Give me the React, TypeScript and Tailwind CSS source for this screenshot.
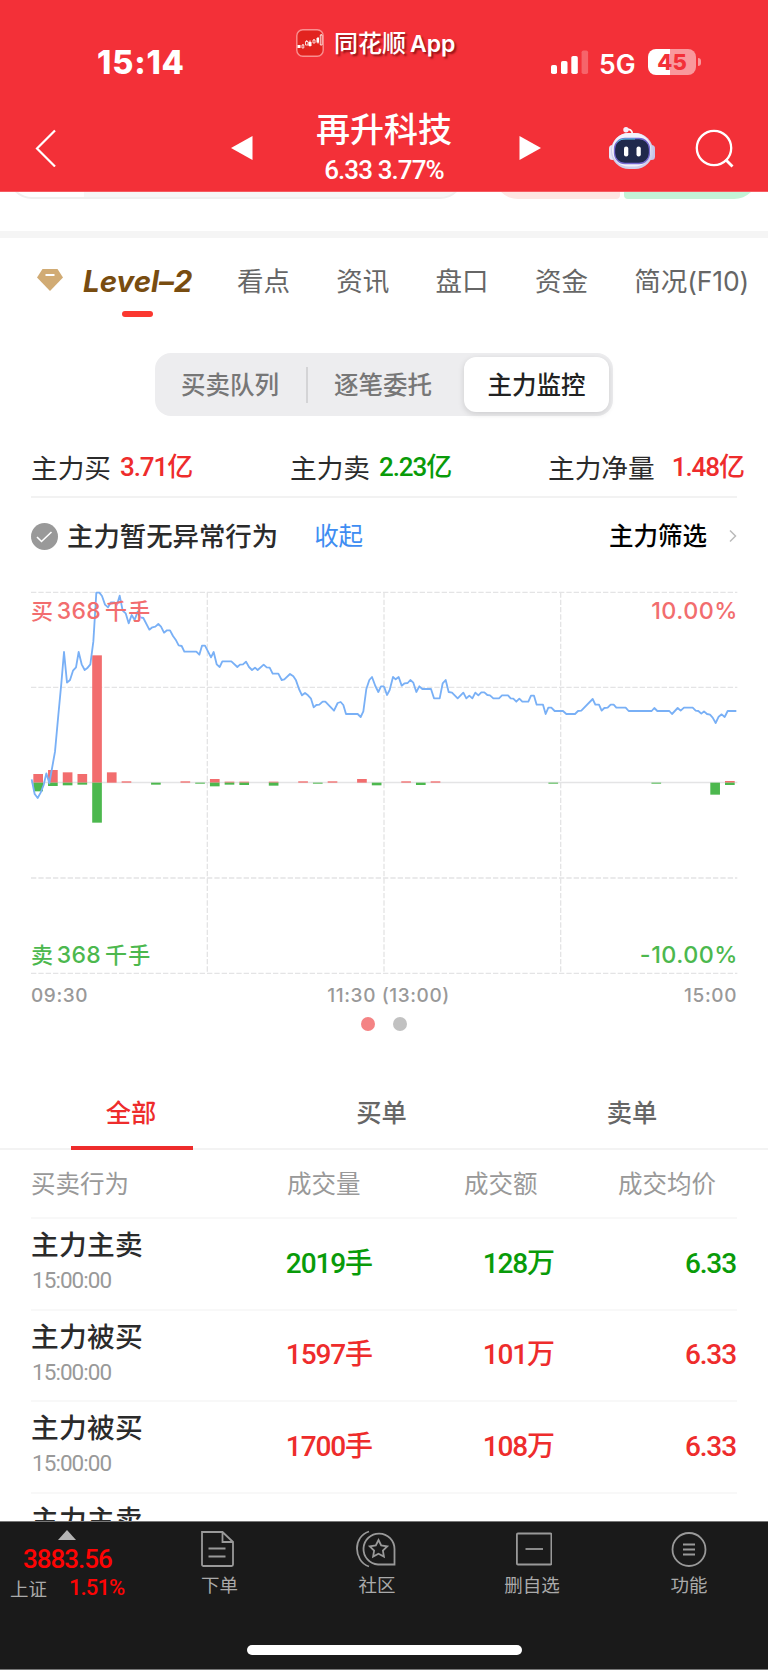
import clsx from "clsx";

const tabs = ["看点", "资讯", "盘口", "资金"];

const summary = [
  { label: "主力买", value: "3.71亿", up: true, className: "w-[259px]" },
  { label: "主力卖", value: "2.23亿", up: false, className: "w-[258px]" },
  { label: "主力净量", value: "1.48亿", up: true, className: "gap-[17px]" },
];

const orders = [
  { name: "主力主卖", time: "15:00:00", volume: "2019手", amount: "128万", price: "6.33", up: false },
  { name: "主力被买", time: "15:00:00", volume: "1597手", amount: "101万", price: "6.33", up: true },
  { name: "主力被买", time: "15:00:00", volume: "1700手", amount: "108万", price: "6.33", up: true },
  { name: "主力主卖", time: "", volume: "", amount: "", price: "", up: false },
];

// Chart units are a third of a pixel, the zero line sits at y = 638
const ZERO = 638;

// slot, top of the buy bar, bottom of the sell bar
const bars = [
  [0, 612, 664], [1, 600, 648], [2, 607, 646], [3, 612, 644], [4, 256, 758],
  [5, 607, 638], [6, 634, 638], [8, 638, 644], [10, 634, 638], [11, 638, 641],
  [12, 627, 649], [13, 635, 644], [14, 635, 645], [16, 635, 647], [18, 634, 638],
  [19, 638, 641], [20, 634, 638], [22, 627, 638], [23, 638, 646], [25, 634, 638],
  [26, 638, 645], [27, 634, 638], [35, 638, 641], [42, 638, 641], [46, 638, 674],
  [47, 633, 645],
];

const morning =
  "95,628 104,672 113,684 122,668 131,645 139,610 148,640 165,545 175,435 184,340 192,246 201,338 210,330 219,302 228,292 236,246 245,283 254,300 263,293 271,283 280,215 289,68 298,68 306,78 315,104 324,112 333,97 342,97 351,104 359,77 368,122 377,130 386,160 395,135 404,150 413,125 421,142 430,144 448,179 457,172 466,170 475,162 483,170 492,188 501,181 510,181 519,198 527,209 536,226 545,228 553,245 589,245 598,254 606,227 615,227 633,262 641,246 650,283 659,291 667,274 694,274 712,291 720,284 729,283 738,275 747,291 756,300 765,293 773,300 791,284 800,292 809,293 818,311 835,311 845,330 853,328 870,312 880,319 888,331 897,357 906,376 915,369 924,376 933,386 941,412 949,405 958,404 968,395 976,395 1002,422 1013,399 1022,396 1030,405 1038,432 1073,432 1082,441 1090,424 1099,357 1108,330 1116,321 1126,348 1135,366 1143,349 1152,349";

const afternoon =
  "0,349 9,375 17,360 27,321 35,328 44,321 53,347 62,340 71,339 79,330 88,338 97,366 106,349 115,357 141,357 150,385 167,385 176,340 185,330 194,366 204,368 221,385 238,368 247,385 256,377 265,385 274,368 283,376 292,367 301,367 310,375 318,376 328,385 345,385 354,376 372,376 380,385 388,386 397,395 406,386 415,395 433,395 441,377 450,377 458,404 477,404 485,432 493,413 502,413 512,423 537,423 547,432 573,432 582,423 592,422 626,387 634,404 645,404 653,422 661,414 671,413 680,404 689,404 697,413 725,413 734,423 803,423 811,414 820,423 856,423 864,432 881,414 890,422 900,413 926,413 935,422 943,423 952,431 960,424 969,432 978,434 986,443 995,459 1004,440 1013,433 1022,441 1031,423 1057,423";

const AppLogo = () => (
  <svg className="mt-[29px] size-7" viewBox="0 0 28 28" fill="none">
    <rect x="0.8" y="0.8" width="26.4" height="26.4" rx="6" fill="#e2231f" stroke="#f98f90" strokeWidth="1.4" />
    <g fill="#fff">
      <path d="M1.5 16h3v3h-3zM12.500 13h3v4h-3zM20.500 9h2.500v4.500h-2.500z" />
      <path d="M13.500 11.500h1v6h-1zM21.500 8h1v6.500h-1z" />
    </g>
    <g stroke="#fff" strokeWidth="0.800">
      <path d="M6 16h1.800v3H6zM9.500 12.500H12V16H9.500zM17 11h2v3h-2zM24.300 6h1.800v10h-1.800zM10.700 11v1.500M18 10v1M7 15v1M25.200 5v1" />
    </g>
  </svg>
);

const Robot = () => (
  <svg className="h-11 w-[48px]" viewBox="0 0 48 44" fill="none">
    <path d="M17.500 4c4-1.500 7 0 7 4.500" stroke="#fff" strokeWidth="1.800" />
    <circle cx="18" cy="3.800" r="2.700" fill="#f5eefc" />
    <rect x="1" y="19" width="7" height="15" rx="3.500" fill="#e8e6f8" />
    <rect x="40" y="19" width="7" height="15" rx="3.500" fill="#c5c4ea" />
    <rect x="3" y="7" width="42" height="36" rx="18" fill="#cfcfec" />
    <rect x="4" y="7" width="39" height="33.500" rx="16.500" fill="#f3f1fb" />
    <rect x="6.500" y="12.500" width="35" height="25" rx="10.500" fill="#20294c" stroke="#7569cf" strokeWidth="1.300" />
    <path d="M9 16.500c2-2.800 5-3.500 9-3.500h9" stroke="#4cc4d8" strokeWidth="1" />
    <rect x="16" y="20.500" width="4.300" height="10" rx="2.100" fill="#fff" />
    <rect x="28.500" y="20.500" width="4.300" height="10" rx="2.100" fill="#fff" />
  </svg>
);

const Header = () => (
  <header className="h-48 border-b border-[#f65a60] bg-[#f33038] text-white">
    <div className="flex h-[100px] items-start">
      <div className="mt-[47px] w-[296px] pl-[97px] font-['Inter'] text-[32.500px] leading-8 font-extrabold tracking-[0.8px]">15:14</div>
      <AppLogo />
      <div className="mt-[32px] ml-[10px] w-[217px] text-[24px] leading-6 font-medium whitespace-nowrap [text-shadow:2px_2px_2px_rgba(90,0,0,0.6)]">
        同花顺<span className="ml-[4px] font-['Inter'] text-[23px] font-semibold">App</span>
      </div>
      <svg className="mt-[50px] h-6 w-[38px]" viewBox="0 0 38 24" fill="#fff">
        <rect y="15" width="6" height="9" rx="1.800" />
        <rect x="10" y="11" width="6.500" height="13" rx="1.800" />
        <rect x="20.300" y="6" width="6.500" height="18" rx="1.800" />
        <rect x="30.600" y="0.500" width="6.500" height="23.500" rx="1.800" opacity="0.250" />
      </svg>
      <div className="mt-[51px] ml-[10px] w-[49px] font-['Inter'] text-[26.500px] leading-[26px] font-semibold">5G</div>
      <div className="mt-[49px] flex h-[26px] w-[48px] items-center justify-center rounded-[8px] bg-[linear-gradient(90deg,#fff_46%,#f9989c_46%)] font-['Inter'] text-[22px] leading-none font-extrabold text-[#f33038]">
        45
      </div>
      <div className="mt-[58px] ml-0.5 h-2 w-[2.5px] rounded-r-full bg-[#f9989c]" />
    </div>
    <div className="flex h-[91px] items-start">
      <svg className="mt-[29px] ml-[34px] h-[38px] w-6" viewBox="0 0 24 38" fill="none" stroke="#fff" strokeWidth="2.200">
        <path d="M21 1.500 3 19.500 21 37.500" />
      </svg>
      <svg className="mt-9 ml-[173px] h-6 w-[22px]" viewBox="0 0 22 24" fill="#fff">
        <path d="M0 12 21.500 0v24z" />
      </svg>
      <div className="ml-[31px] flex w-[200px] flex-col items-center">
        <h1 className="mt-[13px] text-[34px] leading-[34px] font-medium">再升科技</h1>
        <p className="mt-[9px] font-['Roboto'] text-[26px] leading-7 font-medium tracking-[-0.9px] whitespace-nowrap">6.33 3.77%</p>
      </div>
      <svg className="mt-9 ml-[35px] h-6 w-[22px]" viewBox="0 0 22 24" fill="#fff">
        <path d="M22 12 .5 0v24z" />
      </svg>
      <div className="mt-[26px] ml-[67px]">
        <Robot />
      </div>
      <svg className="mt-[29px] ml-[39px] h-[40px] w-[40px]" viewBox="0 0 40 40" fill="none" stroke="#fff" strokeWidth="2.300">
        <circle cx="19" cy="19" r="17.200" />
        <path d="m30.500 30.500 7 7" strokeWidth="2.800" />
      </svg>
    </div>
  </header>
);

const Chart = () => (
  <svg className="block h-[400px] w-full" viewBox="0 30 2304 1200" fill="none">
    <g stroke="#e4e4e5" strokeWidth="4" strokeDasharray="16 6">
      <path d="M93 67H2212M93 352H2212M93 924H2212M93 1210H2212" />
      <path d="M622 67V1209M1152 67V1209M1682 67V1209" />
    </g>
    <path d="M93 637.500H2212" stroke="#e4e4e5" strokeWidth="4" />
    {bars.map(([slot, top, bottom]) => (
      <g key={slot}>
        <rect x={100 + slot * 44.15} y={top} width="29" height={ZERO - top} fill="#f26d6e" />
        <rect x={100 + slot * 44.15} y={ZERO} width="29" height={bottom - ZERO} fill="#4cb84e" />
      </g>
    ))}
    <g stroke="#79b0f6" strokeWidth="5.500" strokeLinejoin="round">
      <polyline points={morning} />
      <polyline points={afternoon} transform="translate(1152 0)" />
    </g>
    <g fontSize="66" fontWeight="500" fontFamily="Inter, 'Noto Sans CJK SC', sans-serif">
      <g fill="#f26d6e">
        <text x="93" y="148">
          买<tspan x="170" fontSize="69" letterSpacing="1">368</tspan>
          <tspan x="315" letterSpacing="4">千手</tspan>
        </text>
        <text x="2214" y="148" textAnchor="end" fontSize="70" letterSpacing="1.500">10.00%</text>
      </g>
      <g fill="#4cb84e">
        <text x="93" y="1180">
          卖<tspan x="170" fontSize="69" letterSpacing="1">368</tspan>
          <tspan x="315" letterSpacing="4">千手</tspan>
        </text>
        <text x="2214" y="1180" textAnchor="end" fontSize="70" letterSpacing="1.500">-10.00%</text>
      </g>
    </g>
  </svg>
);

const OrderRow = ({ order }: { order: (typeof orders)[number] }) => (
  <div className="mx-[31px] flex h-[91.6px] shrink-0 border-b-2 border-[#f8f8f8]">
    <div className="w-[180px] pt-[12px]">
      <div className="text-[27.700px] leading-7 font-medium tracking-[0.3px] text-[#2b2b2b]">{order.name}</div>
      {order.time && (
        <div className="mt-[9px] ml-[1px] font-['Roboto'] text-[22.500px] leading-6 tracking-[-0.95px] text-[#999]">{order.time}</div>
      )}
    </div>
    <div
      className={clsx(
        "flex flex-1 items-center text-right font-['Roboto','Noto_Sans_CJK_SC'] text-[28px] leading-none font-medium tracking-[-1.1px]",
        order.up ? "text-[#ee2c2c]" : "text-[#099b09]",
      )}
    >
      <span className="w-[161px]">{order.volume}</span>
      <span className="w-[182px]">{order.amount}</span>
      <span className="w-[182px]">{order.price}</span>
    </div>
  </div>
);

const BottomBar = () => (
  <footer className="h-[149px] border-y border-[#777] bg-[#1a1a1a] text-[18.500px] leading-5 text-[#aaa]">
    <div className="flex h-[84px]">
      <div className="w-[150px] pt-2">
        <svg className="ml-[58px] h-[10px] w-[18px]" viewBox="0 0 18 10" fill="#b4b4b4">
          <path d="M9 0 18 10H0z" />
        </svg>
        <div className="mt-[5px] ml-[23px] font-['Roboto'] text-[26px] leading-7 font-medium tracking-[-1px] text-[#fe0404]">3883.56</div>
        <div className="mt-[3px] flex items-center pl-[10px]">
          <span className="pt-[1px]">上证</span>
          <span className="ml-[22px] font-['Roboto'] text-[22px] leading-6 font-medium tracking-[-0.9px] text-[#fe0404]">1.51%</span>
        </div>
      </div>
      <div className="flex w-[139px] flex-col items-center pt-[9px]">
        <svg className="mr-[5px] size-9" viewBox="0 0 36 36" fill="none" stroke="#999" strokeWidth="1.800">
          <path d="M3 1h20.500L34 11v22.500a1.500 1.500 0 0 1-1.500 1.500h-28A1.500 1.500 0 0 1 3 33.500V1zM23.500 1v10H34M9.500 17.500h17M9.500 25.500h17" />
        </svg>
        <span className="mt-[8px]">下单</span>
      </div>
      <div className="flex w-[176px] flex-col items-center pt-[8px]">
        <svg className="mr-[2px] h-[38px] w-[40px]" viewBox="0 0 40 38" fill="none" stroke="#999" strokeWidth="1.800">
          <path d="M13 1.500C5 4 1 11 1 18.500S5 34 13 36.500" />
          <path d="M38.500 34.500H22a15.500 15.500 0 1 1 16.500-15.500z" />
          <path d="m22.500 10 2.700 5.500 6 .9-4.300 4.200 1 6-5.400-2.800-5.400 2.800 1-6-4.300-4.200 6-.9z" />
        </svg>
        <span className="mt-[7px]">社区</span>
      </div>
      <div className="flex w-[134px] flex-col items-center pt-[9px]">
        <svg className="ml-[4px] size-9" viewBox="0 0 36 36" fill="none" stroke="#999" strokeWidth="1.800">
          <rect x="0.900" y="2.500" width="34.500" height="31" rx="1" />
          <path d="M9.500 18h17.500" />
        </svg>
        <span className="mt-[8px]">删自选</span>
      </div>
      <div className="flex w-[169px] flex-col items-center pt-[9px] pl-[11px]">
        <svg className="size-9" viewBox="0 0 36 36" fill="none" stroke="#999" strokeWidth="1.800">
          <circle cx="18" cy="18.500" r="16.500" />
          <path d="M12 13.500h12M12 18.500h12M12 23.500h12" />
        </svg>
        <span className="mt-[8px]">功能</span>
      </div>
    </div>
    <div className="mt-[39px] ml-[246.500px] h-[10px] w-[275px] rounded-full bg-white" />
  </footer>
);

const App = () => {
  return (
    <div className="flex h-[1670px] w-[768px] flex-col overflow-hidden bg-white font-['Inter','Noto_Sans_CJK_SC',sans-serif] text-[#2b2b2b]">
      <Header />

      {/* bottom edge of the cards that are scrolled under the header */}
      <div className="h-[39px]">
        <div className="flex h-[7px] items-end overflow-hidden pl-[8px]">
          <div className="h-[60px] w-[456px] shrink-0 rounded-[24px] border-2 border-[#efefef] bg-[linear-gradient(90deg,#fff_74px,#f6f6f6_74px)]" />
          <div className="ml-[30px] h-[60px] w-[126px] shrink-0 rounded-br-[4px] rounded-bl-[24px] bg-[#fee5e2]" />
          <div className="ml-[4px] h-[60px] w-[134px] shrink-0 rounded-br-[24px] rounded-bl-[4px] bg-[#c3f3d7]" />
        </div>
      </div>
      <div className="h-[7px] bg-[#f5f5f5]" />

      <nav className="flex h-[115px] items-start text-[26.500px] leading-7 whitespace-nowrap text-[#666]">
        <svg className="mt-[30px] ml-[37px] h-[24px] w-[26px]" viewBox="0 0 26 24">
          <path d="M5.500 1h15L26 9.500 13 23 0 9.500z" fill="#d1ab74" />
          <path d="M8.500 7h9" stroke="#fff" strokeWidth="2" />
        </svg>
        <div className="ml-[20px] flex w-[154px] flex-col pt-[29px]">
          <span className="text-[29.500px] font-bold text-[#784c10] italic">Level–2</span>
          <span className="mt-[16px] ml-[39px] h-[6px] w-[31px] rounded-full bg-[#fb3830]" />
        </div>
        <div className="flex gap-[46.300px] pt-[29px]">
          {tabs.map((tab) => (
            <span key={tab}>{tab}</span>
          ))}
          <span>
            简况<span className="tracking-[-0.1px]">(F10)</span>
          </span>
        </div>
      </nav>

      <div className="ml-[155px] flex h-[63px] w-[458px] items-center rounded-[16px] bg-[#ededef] text-[24.500px] leading-none font-medium text-[#777]">
        <span className="w-[151px] pt-[1px] pl-[26px]">买卖队列</span>
        <span className="h-9 w-[2px] bg-[#d4d4d6]" />
        <span className="w-[156px] pt-[1px] pl-[26px]">逐笔委托</span>
        <span className="flex h-[55px] w-[145px] items-center justify-center rounded-[12px] bg-white pt-[1px] text-[#222] shadow-[0_2px_6px_rgba(0,0,0,0.14)]">
          主力监控
        </span>
      </div>

      <div className="mt-[24px] ml-[31px] flex h-[56px] w-[737px] items-center whitespace-nowrap">
        {summary.map((item) => (
          <div key={item.label} className={clsx("flex items-center gap-[9px]", item.className)}>
            <span className="text-[26.700px] leading-none">{item.label}</span>
            <span
              className={clsx(
                "pb-[2px] font-['Roboto','Noto_Sans_CJK_SC'] text-[26px] leading-none font-medium tracking-[-1.1px]",
                item.up ? "text-[#ee2c2c]" : "text-[#099b09]",
              )}
            >
              {item.value}
            </span>
          </div>
        ))}
      </div>
      <div className="mx-[31px] h-[2px] bg-[#f2f2f2]" />

      <div className="mx-[31px] flex h-[82px] items-center pb-[6px] text-[24.500px] leading-none font-medium">
        <svg className="size-[27px]" viewBox="0 0 27 27" fill="none">
          <circle cx="13.500" cy="13.500" r="13.500" fill="#999" />
          <path d="m6 14 4.500 4.500L20.500 9" stroke="#fff" strokeWidth="1.600" />
        </svg>
        <span className="ml-[9px] text-[26.400px]">主力暂无异常行为</span>
        <span className="ml-[36px] font-normal text-[#3e8df2]">收起</span>
        <span className="ml-auto text-black">主力筛选</span>
        <svg className="ml-[22px] h-[14px] w-[8px]" viewBox="0 0 8 14" fill="none" stroke="#bbb" strokeWidth="1.500">
          <path d="m1 1.500 5.500 5.500L1 12.500" />
        </svg>
      </div>

      <Chart />
      <div className="mx-[31px] mt-[6px] flex h-5 items-center justify-between font-['Inter'] text-[19px] leading-5 font-medium tracking-[0.6px] text-[#999]">
        <span>09:30</span>
        <span className="ml-[5px]">11:30 (13:00)</span>
        <span>15:00</span>
      </div>
      <div className="mt-[11px] flex justify-center gap-[18px]">
        <span className="size-[14px] rounded-full bg-[#f48384]" />
        <span className="size-[14px] rounded-full bg-[#c1c1c1]" />
      </div>

      <div className="mt-[49px] flex h-[70px] shrink-0 border-b-2 border-[#f3f3f3] pl-[6px] text-[25.300px] leading-none font-medium text-[#666]">
        <div className="relative flex w-[250px] items-center justify-center pb-[2px] text-[#ee2c2c]">
          全部
          <span className="absolute -bottom-[2px] left-[65px] h-[4px] w-[122px] bg-[#ee2c2c]" />
        </div>
        <div className="flex w-[251px] items-center justify-center pb-[2px]">买单</div>
        <div className="flex w-[250px] items-center justify-center pb-[2px]">卖单</div>
      </div>

      <div className="mx-[31px] flex h-[69px] shrink-0 items-center border-b-2 border-[#f8f8f8] pt-[2px] text-[24.500px] leading-none text-[#999]">
        <span className="w-[256px]">买卖行为</span>
        <span className="w-[177px]">成交量</span>
        <span className="w-[154px]">成交额</span>
        <span>成交均价</span>
      </div>
      <div className="flex min-h-0 flex-1 flex-col overflow-hidden">
        {orders.map((order, i) => (
          <OrderRow key={i} order={order} />
        ))}
      </div>

      <BottomBar />
    </div>
  );
};

export default App;
